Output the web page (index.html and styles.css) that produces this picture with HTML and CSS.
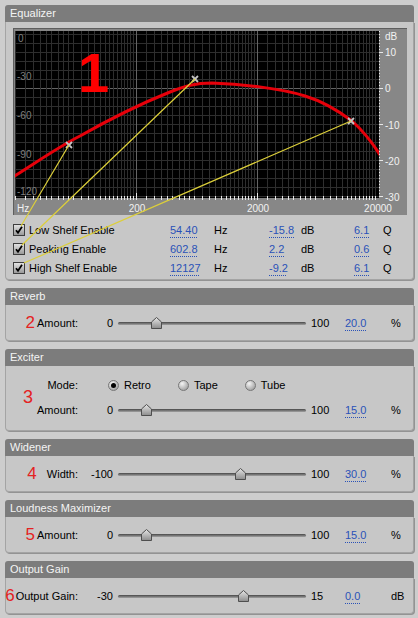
FILE: index.html
```html
<!DOCTYPE html>
<html lang="en">
<head>
  <meta charset="UTF-8" />
  <meta name="viewport" content="width=device-width, initial-scale=1.0" />
  <title>Effects Rack</title>
  <link rel="stylesheet" href="styles.css">
</head>
<body>
  <!-- shared gradient for the slider thumbs -->
  <svg class="defs" width="0" height="0">
    <linearGradient id="thumb-grad" x1="0" y1="0" x2="0" y2="1">
      <stop offset="0" stop-color="#e6e6e6"/>
      <stop offset="1" stop-color="#8c8c8c"/>
    </linearGradient>
  </svg>

  <!-- Equalizer -->
  <div class="panel eq">
    <div class="panel-head">Equalizer</div>
    <div class="panel-body eq-body">
      <svg class="graph" width="394" height="187" viewBox="13 28 394 187">
        <defs>
          <clipPath id="plot-clip"><rect x="15" y="31" width="364" height="167"/></clipPath>
        </defs>
        <rect class="frame" x="13" y="28" width="394" height="187"/>
        <path class="frame-edge" d="M13 28.5H407M13.5 28V215"/>
        <rect class="plot" x="15" y="31" width="364" height="167"/>
        <g id="grid"></g>
        <g class="axis-dim">
          <text x="18" y="42">0</text>
          <text x="17" y="80">-30</text>
          <text x="17" y="119">-60</text>
          <text x="17" y="158">-90</text>
          <text x="17" y="195">-120</text>
        </g>
        <path class="curve" clip-path="url(#plot-clip)"
          d="M13,177 C40,160 60,146 80,136 C110,119 140,104 170,92 C185,86 195,83 212,83 C240,84 280,88 305,96 C325,102 340,112 352,121 C362,130 372,142 380,155"/>
        <g class="marks">
          <path d="M66 142l6 6m0-6l-6 6"/>
          <path d="M192 76l6 6m0-6l-6 6"/>
          <path d="M348 118l6 6m0-6l-6 6"/>
        </g>
        <g id="ticks">
          <path class="dots" d="M379.5 31V198"/>
          <path class="tick" d="M379 52.5h4M379 88.5h4M379 124.5h4M379 160.5h4M379 196.5h4"/>
        </g>
        <g class="axis-light">
          <text x="385" y="40">dB</text>
          <text x="385" y="56">10</text>
          <text x="385" y="92">0</text>
          <text x="385" y="129">-10</text>
          <text x="385" y="165">-20</text>
          <text x="385" y="201">-30</text>
          <text x="17" y="212">Hz</text>
          <text class="mid" x="137" y="212">200</text>
          <text class="mid" x="258" y="212">2000</text>
          <text class="mid" x="378" y="212">20000</text>
        </g>
      </svg>

      <div class="bands">
        <div class="band">
          <span class="check"><svg viewBox="0 0 10 10"><path d="M2 5.2l2 2.6L8 1.8"/></svg></span>
          <span class="band-name">Low Shelf Enable</span>
          <a class="val" href="#">54.40</a><span>Hz</span>
          <a class="val" href="#">-15.8</a><span>dB</span>
          <a class="val" href="#">6.1</a><span>Q</span>
        </div>
        <div class="band">
          <span class="check"><svg viewBox="0 0 10 10"><path d="M2 5.2l2 2.6L8 1.8"/></svg></span>
          <span class="band-name">Peaking Enable</span>
          <a class="val" href="#">602.8</a><span>Hz</span>
          <a class="val" href="#">2.2</a><span>dB</span>
          <a class="val" href="#">0.6</a><span>Q</span>
        </div>
        <div class="band">
          <span class="check"><svg viewBox="0 0 10 10"><path d="M2 5.2l2 2.6L8 1.8"/></svg></span>
          <span class="band-name">High Shelf Enable</span>
          <a class="val" href="#">12127</a><span>Hz</span>
          <a class="val" href="#">-9.2</a><span>dB</span>
          <a class="val" href="#">6.1</a><span>Q</span>
        </div>
      </div>
    </div>

    <span class="big-num">1</span>
    <!-- lines from the curve handles to their band rows -->
    <svg class="links" width="409" height="275" viewBox="5 5 409 275">
      <path d="M69 145L21 226M195 79L22 245M351 121L24 263"/>
    </svg>
  </div>

  <!-- Reverb -->
  <div class="panel">
    <div class="panel-head">Reverb</div>
    <div class="panel-body">
      <div class="row">
        <span class="row-label"><span class="num">2</span>Amount:</span>
        <span class="min">0</span>
        <span class="track"><svg class="thumb" style="left:20%" viewBox="0 0 11 12"><path d="M5.5 .5L10.5 5v6.5H.5V5z"/></svg></span>
        <span>100</span>
        <span><a class="val" href="#">20.0</a></span>
        <span>%</span>
      </div>
    </div>
  </div>

  <!-- Exciter -->
  <div class="panel">
    <div class="panel-head">Exciter</div>
    <div class="panel-body exciter-body">
      <span class="num num-3">3</span>
      <div class="row">
        <span class="row-label">Mode:</span>
        <div class="modes">
          <label class="opt"><span class="radio on"></span>Retro</label>
          <label class="opt"><span class="radio"></span>Tape</label>
          <label class="opt"><span class="radio"></span>Tube</label>
        </div>
      </div>
      <div class="row">
        <span class="row-label">Amount:</span>
        <span class="min">0</span>
        <span class="track"><svg class="thumb" style="left:15%" viewBox="0 0 11 12"><path d="M5.5 .5L10.5 5v6.5H.5V5z"/></svg></span>
        <span>100</span>
        <span><a class="val" href="#">15.0</a></span>
        <span>%</span>
      </div>
    </div>
  </div>

  <!-- Widener -->
  <div class="panel">
    <div class="panel-head">Widener</div>
    <div class="panel-body">
      <div class="row">
        <span class="row-label"><span class="num num-wide">4</span>Width:</span>
        <span class="min">-100</span>
        <span class="track"><svg class="thumb" style="left:65%" viewBox="0 0 11 12"><path d="M5.5 .5L10.5 5v6.5H.5V5z"/></svg></span>
        <span>100</span>
        <span><a class="val" href="#">30.0</a></span>
        <span>%</span>
      </div>
    </div>
  </div>

  <!-- Loudness Maximizer -->
  <div class="panel">
    <div class="panel-head">Loudness Maximizer</div>
    <div class="panel-body">
      <div class="row">
        <span class="row-label"><span class="num">5</span>Amount:</span>
        <span class="min">0</span>
        <span class="track"><svg class="thumb" style="left:15%" viewBox="0 0 11 12"><path d="M5.5 .5L10.5 5v6.5H.5V5z"/></svg></span>
        <span>100</span>
        <span><a class="val" href="#">15.0</a></span>
        <span>%</span>
      </div>
    </div>
  </div>

  <!-- Output Gain -->
  <div class="panel">
    <div class="panel-head">Output Gain</div>
    <div class="panel-body">
      <div class="row">
        <span class="row-label"><span class="num num-tight">6</span>Output Gain:</span>
        <span class="min">-30</span>
        <span class="track"><svg class="thumb" style="left:66.7%" viewBox="0 0 11 12"><path d="M5.5 .5L10.5 5v6.5H.5V5z"/></svg></span>
        <span>15</span>
        <span><a class="val" href="#">0.0</a></span>
        <span>dB</span>
      </div>
    </div>
  </div>

  <script>
    const svgNS = 'http://www.w3.org/2000/svg';
    const grid = document.getElementById('grid');
    const ticks = document.getElementById('ticks');
    const steps = [1, 1.2, 1.4, 1.6, 1.8, 2, 2.25, 2.5, 2.75, 3, 3.5, 4, 4.5, 5, 5.5, 6, 6.5, 7, 7.5, 8, 8.5, 9, 9.5];

    function addLine(parent, x1, y1, x2, y2, cls) {
      const line = document.createElementNS(svgNS, 'line');
      line.setAttribute('x1', x1);
      line.setAttribute('y1', y1);
      line.setAttribute('x2', x2);
      line.setAttribute('y2', y2);
      line.setAttribute('class', cls);
      parent.appendChild(line);
    }

    // horizontal lines, 2.5 dB apart (0 dB sits on y = 88)
    for (let y = 34; y <= 196; y += 9) {
      addLine(grid, 15, y + 0.5, 379, y + 0.5, y === 88 ? 'grid-major' : 'grid-minor');
    }

    // vertical lines on a log scale, 20 Hz .. 20 kHz, 121px per decade
    [0, 1, 2].forEach(decade => {
      steps.forEach(k => {
        const x = Math.round(15 + 121 * (decade + Math.log10(k))) + 0.5;
        const major = k === 1 && decade > 0;
        addLine(grid, x, 31, x, 198, major ? 'grid-major' : 'grid-minor');
        addLine(ticks, x, major ? 193 : 196, x, 200, 'tick');
      });
    });
  </script>
</body>
</html>
```

FILE: styles.css
```css
*, *::before, *::after {
  box-sizing: border-box;
}
body {
  margin: 0;
  padding-top: 5px;
  background-color: #cdcdcd;
  font-family: "Liberation Sans", Arial, sans-serif;
  font-size: 11px;
  color: #000;
}
.defs {
  position: absolute;
}
.panel {
  position: relative;
  margin: 0 4px 8px 5px;
}
.panel-head {
  height: 17px;
  line-height: 17px;
  padding-left: 5px;
  background-color: #7c7c7c;
  color: #f4f4f4;
  border-radius: 3px 3px 0 0;
}
.panel-body {
  position: relative;
  padding: 9px 0 8px;
  background-color: #c7c7c7;
  border: 1px solid #a4a4a4;
  border-top: 0;
  border-radius: 0 0 4px 4px;
  box-shadow: 1px 1px 0 #939393;
}

/* Equalizer */
.eq-body {
  padding: 6px 0 2px 7px;
}
.graph {
  display: block;
  font-family: "Liberation Sans", Arial, sans-serif;
  font-size: 10px;
}
.frame {
  fill: #878787;
}
.frame-edge {
  stroke: #5e5e5e;
  fill: none;
}
.plot {
  fill: #000;
}
.grid-minor {
  stroke: #2e2e2e;
  shape-rendering: crispEdges;
}
.grid-major {
  stroke: #646464;
  shape-rendering: crispEdges;
}
.axis-dim {
  fill: #7e7e7e;
}
.axis-light {
  fill: #f2f2f2;
}
.axis-light .mid {
  text-anchor: middle;
}
.curve {
  fill: none;
  stroke: #e6000a;
  stroke-width: 3;
}
.marks path {
  stroke: #c4c4c4;
  stroke-width: 1.8;
}
.tick {
  stroke: #e8e8e8;
  fill: none;
  shape-rendering: crispEdges;
}
.dots {
  stroke: #e8e8e8;
  stroke-dasharray: 1 2;
  shape-rendering: crispEdges;
}
.big-num {
  position: absolute;
  left: 73px;
  top: 40px;
  font-size: 56px;
  line-height: 56px;
  font-weight: bold;
  color: #ff0000;
}
.links {
  position: absolute;
  left: 0;
  top: 0;
  pointer-events: none;
}
.links path {
  fill: none;
  stroke: #dccf3a;
  stroke-width: 1.2;
}
.bands {
  margin-top: 5px;
}
.band {
  display: grid;
  grid-template-columns: 12px 145px 44px 55px 32px 53px 29px auto;
  align-items: center;
  height: 19px;
}
.band-name {
  padding-left: 4px;
}
.check {
  width: 12px;
  height: 12px;
  border: 1px solid #3e3e3e;
  background: linear-gradient(#e2e2e2, #9a9a9a);
}
.check svg {
  display: block;
  width: 10px;
  height: 10px;
}
.check path {
  fill: none;
  stroke: #000;
  stroke-width: 1.8;
}
.val {
  color: #2a52b8;
  text-decoration: underline dotted;
  text-underline-offset: 3px;
}

/* slider rows */
.row {
  display: grid;
  grid-template-columns: 73px 39px 193px 34px 46px 1fr;
  align-items: center;
  height: 18px;
}
.row-label {
  display: flex;
  justify-content: flex-end;
  align-items: center;
  padding-right: 1px;
  white-space: nowrap;
}
.num {
  flex: none;
  margin-right: 2px;
  font-size: 17px;
  line-height: 18px;
  color: #e42222;
}
.num-wide {
  margin-right: 10px;
}
.num-tight {
  margin-right: 1px;
}
.num-3 {
  position: absolute;
  left: 17px;
  top: 22px;
  font-size: 18px;
}
.min {
  text-align: right;
  padding-right: 5px;
}
.track {
  position: relative;
  width: 188px;
  height: 3px;
  border-radius: 2px;
  background: linear-gradient(#474747, #a2a2a2);
}
.thumb {
  position: absolute;
  top: -5px;
  width: 11px;
  height: 12px;
  margin-left: -5px;
}
.thumb path {
  fill: url(#thumb-grad);
  stroke: #4e4e4e;
}

/* exciter */
.exciter-body {
  padding: 10px 0 11px;
}
.exciter-body .row + .row {
  margin-top: 7px;
}
.modes {
  grid-column: 2 / -1;
  display: flex;
  gap: 27px;
  padding-left: 29px;
}
.opt {
  display: flex;
  align-items: center;
  gap: 5px;
}
.radio {
  position: relative;
  width: 11px;
  height: 11px;
  border: 1px solid #777;
  border-radius: 50%;
  background: radial-gradient(circle at 35% 30%, #f4f4f4, #a2a2a2 80%);
}
.radio.on::after {
  content: "";
  position: absolute;
  left: 2px;
  top: 2px;
  width: 5px;
  height: 5px;
  border-radius: 50%;
  background-color: #000;
}
```
